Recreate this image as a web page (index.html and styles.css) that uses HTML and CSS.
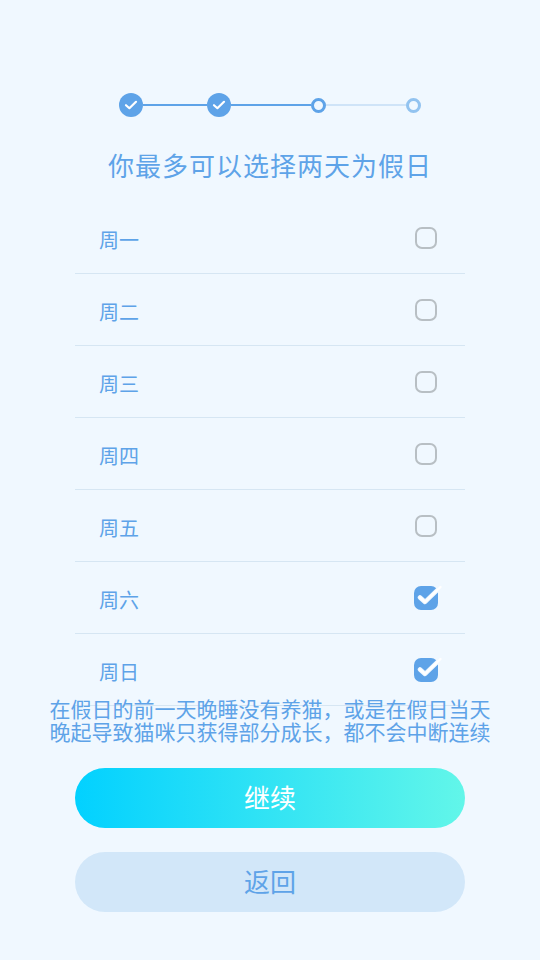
FILE: index.html
```html
<!DOCTYPE html>
<html lang="zh-CN">
<head>
    <meta charset="UTF-8">
    <title>设置假日</title>
    <link rel="stylesheet" href="styles.css">
</head>
<body>
    <div class="page">
        <div class="stepper">
            <span class="step done">
                <svg width="14" height="12" viewBox="0 0 14 12"><path d="M2 6.2 5.4 9.2 12 2.8" fill="none" stroke="#fff" stroke-width="2.2" stroke-linecap="round" stroke-linejoin="round"/></svg>
            </span>
            <span class="bar active short"></span>
            <span class="step done">
                <svg width="14" height="12" viewBox="0 0 14 12"><path d="M2 6.2 5.4 9.2 12 2.8" fill="none" stroke="#fff" stroke-width="2.2" stroke-linecap="round" stroke-linejoin="round"/></svg>
            </span>
            <span class="bar active"></span>
            <span class="step current"></span>
            <span class="bar"></span>
            <span class="step todo"></span>
        </div>

        <h1 class="title">你最多可以选择两天为假日</h1>

        <ul class="day-list">
            <li class="day-row"><span class="day">周一</span><span class="box"></span></li>
            <li class="day-row"><span class="day">周二</span><span class="box"></span></li>
            <li class="day-row"><span class="day">周三</span><span class="box"></span></li>
            <li class="day-row"><span class="day">周四</span><span class="box"></span></li>
            <li class="day-row"><span class="day">周五</span><span class="box"></span></li>
            <li class="day-row">
                <span class="day">周六</span>
                <svg class="box-on" width="30" height="27" viewBox="0 0 30 27"><rect x="1" y="3" width="24" height="24" rx="7" fill="#5ea3e8"/><path d="M7 14.5 12 19 27.5 4" fill="none" stroke="#f0f8ff" stroke-width="4.5" stroke-linecap="round" stroke-linejoin="round"/><path d="M7 14.5 12 19 27.5 4" fill="none" stroke="#fff" stroke-width="2.4" stroke-linecap="round" stroke-linejoin="round"/></svg>
            </li>
            <li class="day-row">
                <span class="day">周日</span>
                <svg class="box-on" width="30" height="27" viewBox="0 0 30 27"><rect x="1" y="3" width="24" height="24" rx="7" fill="#5ea3e8"/><path d="M7 14.5 12 19 27.5 4" fill="none" stroke="#f0f8ff" stroke-width="4.5" stroke-linecap="round" stroke-linejoin="round"/><path d="M7 14.5 12 19 27.5 4" fill="none" stroke="#fff" stroke-width="2.4" stroke-linecap="round" stroke-linejoin="round"/></svg>
            </li>
        </ul>

        <p class="note">在假日的前一天晚睡没有养猫，或是在假日当天晚起导致猫咪只获得部分成长，都不会中断连续</p>

        <button class="btn primary">继续</button>
        <button class="btn secondary">返回</button>
    </div>
</body>
</html>
```

FILE: styles.css
```css
body {
    margin: 0;
    background-color: #f0f8ff;
    font-family: "Noto Sans CJK SC", "Noto Sans", sans-serif;
    color: #5ea3e8;
}

.page {
    display: flex;
    flex-direction: column;
    align-items: center;
    padding-top: 93px;
    min-height: 960px;
    box-sizing: border-box;
}

/* 进度条 */
.stepper {
    display: flex;
    align-items: center;
    height: 24px;
}

.step {
    display: flex;
    align-items: center;
    justify-content: center;
    box-sizing: border-box;
    border-radius: 50%;
}

.step.done {
    width: 24px;
    height: 24px;
    background-color: #5ea3e8;
}

.step.current {
    width: 15px;
    height: 15px;
    border: 3px solid #5ea3e8;
    background-color: #f0f8ff;
}

.step.todo {
    width: 15px;
    height: 15px;
    border: 3px solid #92c3f0;
    background-color: #f0f8ff;
}

.bar {
    width: 80px;
    height: 2px;
    background-color: #cfe4f8;
}

.bar.short {
    width: 64px;
}

.bar.active {
    background-color: #5ea3e8;
}

.title {
    margin: 30px 0 19px;
    font-size: 26px;
    font-weight: normal;
    line-height: 36px;
    letter-spacing: 1px;
}

/* 星期列表 */
.day-list {
    list-style: none;
    margin: 0;
    padding: 0;
    width: 390px;
}

.day-row {
    display: flex;
    justify-content: space-between;
    align-items: center;
    height: 71px;
    padding: 0 28px 0 24px;
    border-bottom: 1px solid #d6e6f3;
    font-size: 20px;
}

.day {
    padding-top: 4px;
}

.box {
    width: 22px;
    height: 22px;
    box-sizing: border-box;
    border: 2px solid #b8bfc4;
    border-radius: 7px;
    margin-top: 1px;
}

.box-on {
    margin-right: -6px;
    margin-top: -2px;
}

.note {
    margin: -9px 0 0;
    width: 444px;
    font-size: 21px;
    line-height: 23px;
    text-align: center;
}

.btn {
    width: 390px;
    height: 60px;
    padding: 0 0 4px;
    border: none;
    border-radius: 30px;
    font-family: inherit;
    font-size: 26px;
    cursor: pointer;
}

.btn.primary {
    margin-top: 25px;
    color: #fff;
    background: linear-gradient(to right, #02d1ff, #62f6e9);
}

.btn.secondary {
    margin-top: 24px;
    color: #5ea3e8;
    background-color: #d2e7f9;
}
```
